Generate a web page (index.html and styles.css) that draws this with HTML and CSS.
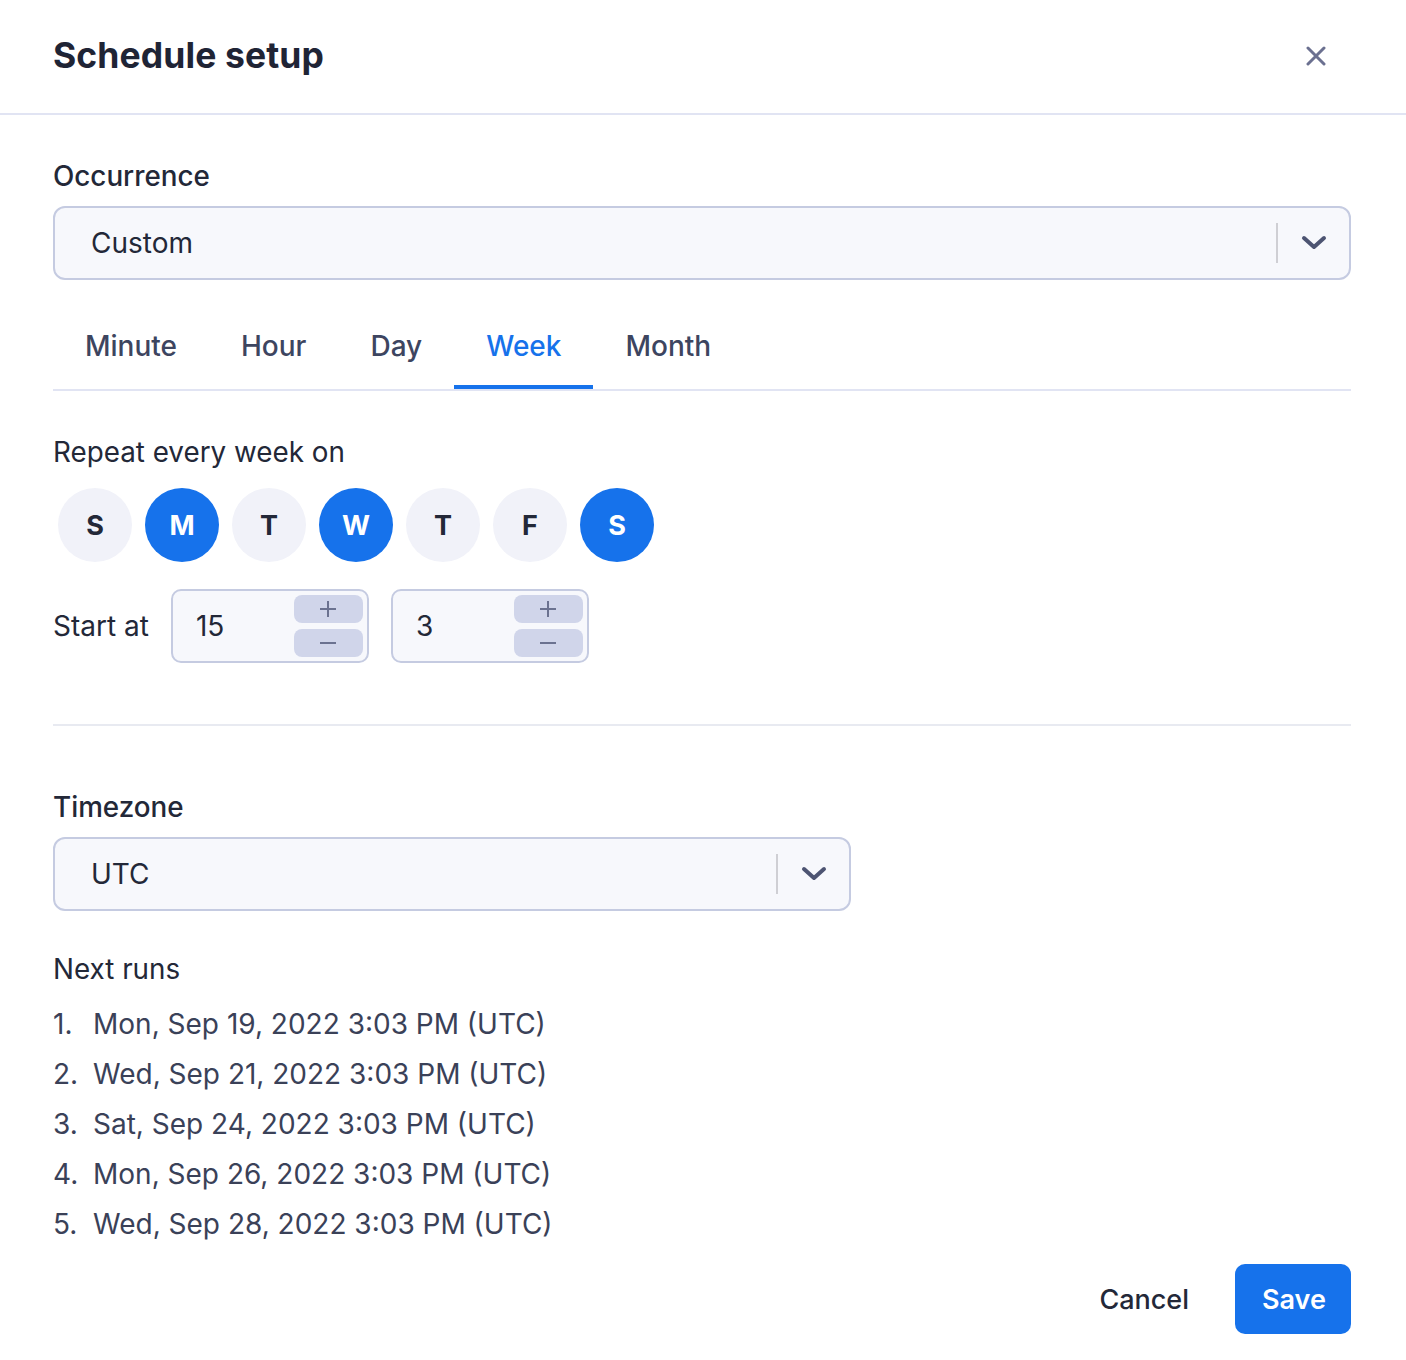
FILE: index.html
```html
<!DOCTYPE html>
<html lang="en">
<head>
<meta charset="utf-8">
<title>Schedule setup</title>
<link rel="stylesheet" href="styles.css">
</head>
<body>
<div class="modal">
  <header class="modal-header">
    <h1 class="title">Schedule setup</h1>
    <button class="close" aria-label="Close">
      <svg width="20" height="20" viewBox="0 0 20 20"><path d="M2 2 L18 18 M18 2 L2 18" stroke="#6b7090" stroke-width="3" stroke-linecap="round" fill="none"/></svg>
    </button>
  </header>
  <main class="modal-body">
    <div class="label label-occ">Occurrence</div>
    <div class="select">
      <span class="select-value">Custom</span>
      <span class="select-sep"></span>
      <svg class="chev" width="26" height="16" viewBox="0 0 26 16"><path d="M3 3 L13 12 L23 3" stroke="#4d5472" stroke-width="4" stroke-linecap="round" stroke-linejoin="round" fill="none"/></svg>
    </div>

    <nav class="tabs">
      <span class="tab">Minute</span>
      <span class="tab">Hour</span>
      <span class="tab">Day</span>
      <span class="tab active">Week</span>
      <span class="tab">Month</span>
    </nav>

    <div class="label label-repeat">Repeat every week on</div>
    <div class="days">
      <span class="day">S</span>
      <span class="day on">M</span>
      <span class="day">T</span>
      <span class="day on">W</span>
      <span class="day">T</span>
      <span class="day">F</span>
      <span class="day on">S</span>
    </div>

    <div class="start-row">
      <span class="start-label">Start at</span>
      <div class="num">
        <span class="num-value">15</span>
        <div class="steppers">
          <span class="step"><svg width="20" height="20" viewBox="0 0 20 20"><path d="M10 2 V18 M2 10 H18" stroke="#6b7290" stroke-width="2" fill="none"/></svg></span>
          <span class="step"><svg width="20" height="20" viewBox="0 0 20 20"><path d="M2 10 H18" stroke="#6b7290" stroke-width="2" fill="none"/></svg></span>
        </div>
      </div>
      <div class="num">
        <span class="num-value">3</span>
        <div class="steppers">
          <span class="step"><svg width="20" height="20" viewBox="0 0 20 20"><path d="M10 2 V18 M2 10 H18" stroke="#6b7290" stroke-width="2" fill="none"/></svg></span>
          <span class="step"><svg width="20" height="20" viewBox="0 0 20 20"><path d="M2 10 H18" stroke="#6b7290" stroke-width="2" fill="none"/></svg></span>
        </div>
      </div>
    </div>

    <hr class="divider">

    <div class="label label-tz">Timezone</div>
    <div class="select select-tz">
      <span class="select-value">UTC</span>
      <span class="select-sep"></span>
      <svg class="chev" width="26" height="16" viewBox="0 0 26 16"><path d="M3 3 L13 12 L23 3" stroke="#4d5472" stroke-width="4" stroke-linecap="round" stroke-linejoin="round" fill="none"/></svg>
    </div>

    <div class="label label-next">Next runs</div>
    <ol class="runs">
      <li><span class="n">1.</span>Mon, Sep 19, 2022 3:03 PM (UTC)</li>
      <li><span class="n">2.</span>Wed, Sep 21, 2022 3:03 PM (UTC)</li>
      <li><span class="n">3.</span>Sat, Sep 24, 2022 3:03 PM (UTC)</li>
      <li><span class="n">4.</span>Mon, Sep 26, 2022 3:03 PM (UTC)</li>
      <li><span class="n">5.</span>Wed, Sep 28, 2022 3:03 PM (UTC)</li>
    </ol>

    <div class="actions">
      <button class="btn btn-cancel">Cancel</button>
      <button class="btn btn-save">Save</button>
    </div>
  </main>
</div>
</body>
</html>
```

FILE: styles.css
```css
* { box-sizing: border-box; }
html, body { margin: 0; padding: 0; background: #ffffff; }
body {
  font-family: Inter, "Noto Sans", "Liberation Sans", sans-serif;
  color: #232838;
  font-size: 28px;
}
.modal { width: 1406px; }

.modal-header {
  height: 115px;
  display: flex;
  align-items: center;
  justify-content: space-between;
  padding: 0 72px 2px 53px;
  border-bottom: 2px solid #e1e4f3;
}
.title {
  margin: 0;
  font-size: 35.5px;
  font-weight: 700;
  color: #1f2435;
  letter-spacing: 0.1px;
}
.close {
  width: 36px; height: 36px;
  border: 0; background: transparent; padding: 0;
  display: flex; align-items: center; justify-content: center;
}

.modal-body { padding: 0 55px 0 53px; }

.label {
  height: 32px;
  line-height: 32px;
  font-size: 27.8px;
  font-weight: 500;
  color: #232838;
}
.label-occ { margin-top: 45px; }
.label-repeat { margin-top: 45px; font-weight: 400; }
.label-tz { margin-top: 65px; }
.label-next { margin-top: 42px; font-weight: 400; }

.select {
  margin-top: 14px;
  height: 74px;
  border: 2px solid #c5cbe1;
  border-radius: 12px;
  background: #f7f8fc;
  display: flex;
  align-items: center;
  padding: 0 22px 0 36px;
}
.select-tz { width: 798px; }
.select-value { flex: 1; font-size: 28px; color: #232838; }
.select-sep {
  width: 2px; height: 40px;
  background: #cfcfd4;
  margin-right: 23px;
}
.chev { display: block; }

.tabs {
  margin-top: 24px;
  display: flex;
  border-bottom: 2px solid #e1e4f3;
}
.tab {
  height: 85px;
  padding: 26px 32px 0;
  line-height: 32px;
  font-size: 28px;
  font-weight: 500;
  color: #3d4560;
}
.tab:first-child { margin-left: 0; }
.tab.active {
  color: #1672eb;
  box-shadow: inset 0 -4px 0 #1672eb;
}

.days {
  margin-top: 20px;
  display: flex;
  gap: 13px;
  padding-left: 5px;
}
.day {
  width: 74px; height: 74px;
  border-radius: 50%;
  background: #f1f2f9;
  display: flex; align-items: center; justify-content: center;
  font-size: 27px; font-weight: 700;
  color: #232838;
}
.day.on { background: #1672eb; color: #ffffff; }

.start-row {
  margin-top: 27px;
  display: flex;
  align-items: center;
  gap: 22px;
}
.start-label { font-size: 28px; color: #232838; }
.num {
  width: 198px; height: 74px;
  border: 2px solid #c5cbe1;
  border-radius: 10px;
  background: #f7f8fc;
  display: flex;
  align-items: center;
  padding: 4px 4px 4px 23px;
}
.num-value { flex: 1; font-size: 28px; color: #232838; }
.steppers {
  display: flex; flex-direction: column; gap: 6px;
}
.step {
  width: 69px; height: 28px;
  border-radius: 8px;
  background: #d0d5ea;
  display: flex; align-items: center; justify-content: center;
}

.divider {
  margin: 61px 0 0;
  border: 0;
  height: 2px;
  background: #e8eaf1;
}

.runs {
  list-style: none;
  margin: 14px 0 0;
  padding: 0;
}
.runs li {
  height: 50px;
  line-height: 50px;
  font-size: 28px;
  color: #3a4158;
}
.runs .n { display: inline-block; width: 40px; }

.actions {
  margin-top: 15px;
  display: flex;
  justify-content: flex-end;
  align-items: center;
  gap: 22px;
}
.btn {
  font-family: inherit;
  font-size: 27px;
  font-weight: 600;
  border: 0;
  height: 70px;
  border-radius: 10px;
  cursor: pointer;
}
.btn-cancel { background: transparent; color: #232838; padding: 0 24px; font-weight: 500; }
.btn-save { background: #1672eb; color: #ffffff; padding: 0 27px; width: 116px; }
```
